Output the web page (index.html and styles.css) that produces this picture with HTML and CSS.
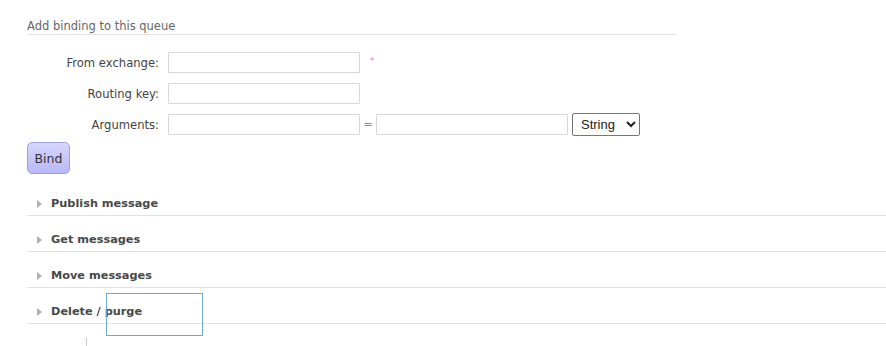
FILE: index.html
```html
<!DOCTYPE html>
<html lang="en">
<head>
    <meta charset="UTF-8">
    <meta name="viewport" content="width=device-width, initial-scale=1.0">
    <title>Queue bindings</title>
    <link rel="stylesheet" href="styles.css">
</head>
<body>
    <div class="container">
        <h3 class="subhead">Add binding to this queue</h3>

        <!-- Binding form -->
        <form class="binding-form">
            <div class="form-row">
                <label for="source">From exchange:</label>
                <input type="text" id="source" class="field">
                <span class="mand">*</span>
            </div>
            <div class="form-row">
                <label for="routing_key">Routing key:</label>
                <input type="text" id="routing_key" class="field">
            </div>
            <div class="form-row">
                <label for="arg_key">Arguments:</label>
                <input type="text" id="arg_key" class="field">
                <span class="equals">=</span>
                <input type="text" id="arg_value" class="field">
                <select class="arg-type">
                    <option>String</option>
                    <option>Number</option>
                    <option>Boolean</option>
                    <option>List</option>
                </select>
            </div>
            <input type="submit" value="Bind" class="bind-btn">
        </form>

        <!-- Collapsed sections -->
        <div class="section first"><span class="arrow"></span>Publish message</div>
        <div class="section"><span class="arrow"></span>Get messages</div>
        <div class="section"><span class="arrow"></span>Move messages</div>
        <div class="section"><span class="arrow"></span>Delete / purge</div>
        <div class="cut-off"><span class="tick"></span></div>
    </div>

    <!-- focus outline drawn over the page -->
    <div class="focus-box"></div>
</body>
</html>
```

FILE: styles.css
```css
body {
    font-family: "DejaVu Sans", Verdana, sans-serif;
    font-size: 11px;
    color: #444;
    margin: 0;
    padding: 0;
    overflow: hidden;
}

.container {
    padding: 18px 0 0 27px;
}

.subhead {
    font-size: 11.5px;
    font-weight: normal;
    color: #666;
    margin: 0;
    width: 650px;
    padding-top: 1px;
    padding-bottom: 1px;
    border-bottom: 1px solid #e2e2e2;
}

.binding-form {
    margin: 17px 0 0 0;
}

.form-row {
    display: flex;
    align-items: center;
    height: 21px;
    margin-bottom: 10px;
}

.form-row label {
    width: 132px;
    text-align: right;
    padding-right: 9px;
    font-size: 11.6px;
    color: #444;
}

.field {
    width: 192px;
    height: 21px;
    box-sizing: border-box;
    border: 1px solid #d8d8d8;
    border-radius: 1px;
    padding: 2px 4px;
    margin: 0;
    font-family: inherit;
    font-size: 11px;
}

.mand {
    color: #f08080;
    font-size: 9px;
    margin-left: 10px;
    margin-top: -4px;
}

.equals {
    color: #888;
    width: 16px;
    text-align: center;
}

.arg-type {
    margin-left: 4px;
    height: 23px;
    width: 68px;
    font-family: "Liberation Sans", Arial, sans-serif;
    font-size: 13px;
    color: #222;
    border: 1px solid #767676;
    border-radius: 2px;
    background: #fff;
    padding: 0 2px 0 4px;
}

.bind-btn {
    display: block;
    margin-top: -3px;
    width: 43px;
    height: 32px;
    font-family: inherit;
    font-size: 12.5px;
    color: #333;
    background: linear-gradient(#d6d6ff, #b8b8f6);
    border: 1px solid #9e9ed8;
    border-radius: 5px;
    padding: 0;
    cursor: pointer;
}

.section {
    display: flex;
    align-items: center;
    height: 36px;
    padding-top: 12px;
    box-sizing: border-box;
    border-bottom: 1px solid #e2e2e2;
    font-size: 11.3px;
    font-weight: bold;
    color: #484848;
}

.section.first {
    margin-top: 6px;
}

.arrow {
    width: 0;
    height: 0;
    margin: 0 9px 0 10px;
    border-top: 4px solid transparent;
    border-bottom: 4px solid transparent;
    border-left: 5px solid #b0b0b0;
}

.cut-off {
    height: 30px;
    padding-top: 13px;
    box-sizing: border-box;
}

.tick {
    display: block;
    margin-left: 59px;
    width: 1px;
    height: 12px;
    background: #ccc;
}

.focus-box {
    position: absolute;
    left: 106px;
    top: 293px;
    width: 95px;
    height: 41px;
    border: 1px solid #6ea7d4;
}
```
